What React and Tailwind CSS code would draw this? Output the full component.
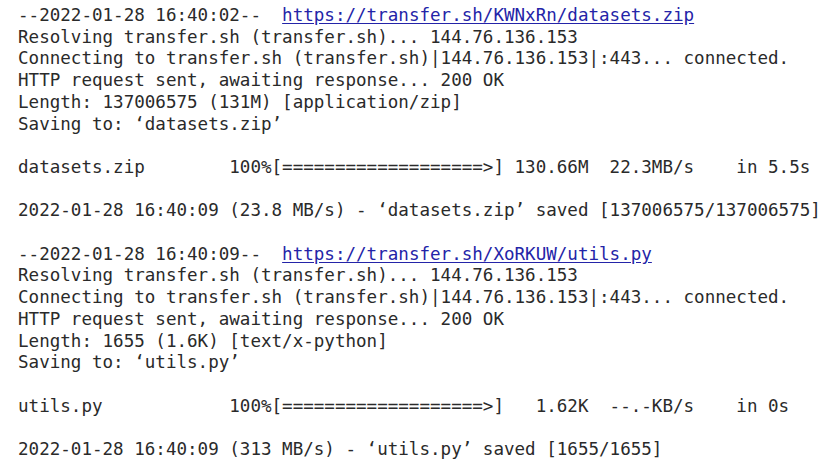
const BAR = '[' + '='.repeat(19) + '>]';

function Link({ children }) {
  return <span className="text-[#2424a8] underline underline-offset-2">{children}</span>;
}

export default function App() {
  return (
    <div className="w-[836px] h-[476px] bg-white overflow-hidden">
      <pre className="pl-[18px] pt-[5px] text-[17.56px] leading-[21.7px] text-[#2a2a2a] font-['DejaVu_Sans_Mono',monospace] whitespace-pre">
{'--2022-01-28 16:40:02--  '}<Link>https://transfer.sh/KWNxRn/datasets.zip</Link>{`
Resolving transfer.sh (transfer.sh)... 144.76.136.153
Connecting to transfer.sh (transfer.sh)|144.76.136.153|:443... connected.
HTTP request sent, awaiting response... 200 OK
Length: 137006575 (131M) [application/zip]
Saving to: ‘datasets.zip’

datasets.zip        100%${BAR} 130.66M  22.3MB/s    in 5.5s

2022-01-28 16:40:09 (23.8 MB/s) - ‘datasets.zip’ saved [137006575/137006575]

--2022-01-28 16:40:09--  `}<Link>https://transfer.sh/XoRKUW/utils.py</Link>{`
Resolving transfer.sh (transfer.sh)... 144.76.136.153
Connecting to transfer.sh (transfer.sh)|144.76.136.153|:443... connected.
HTTP request sent, awaiting response... 200 OK
Length: 1655 (1.6K) [text/x-python]
Saving to: ‘utils.py’

utils.py            100%${BAR}   1.62K  --.-KB/s    in 0s

2022-01-28 16:40:09 (313 MB/s) - ‘utils.py’ saved [1655/1655]`}
      </pre>
    </div>
  );
}
